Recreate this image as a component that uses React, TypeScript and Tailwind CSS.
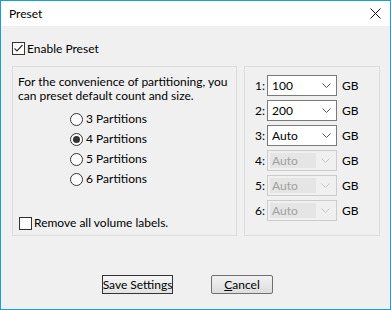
import React from "react";

const font = { fontFamily: 'Lato, "Noto Sans", "Liberation Sans", sans-serif' };

function Check({ checked }: { checked?: boolean }) {
  return (
    <div className="w-[13px] h-[13px] border border-[#333333] bg-white flex items-center justify-center shrink-0">
      {checked && (
        <svg width="11" height="11" viewBox="0 0 11 11">
          <path d="M1.5 5.5 L4 8 L9.5 2" fill="none" stroke="#333" strokeWidth="1.2" />
        </svg>
      )}
    </div>
  );
}

function Radio({ checked, label }: { checked?: boolean; label: string }) {
  return (
    <div className="flex items-center h-[20px]">
      <div className="w-[13px] h-[13px] rounded-full border border-[#333333] bg-white flex items-center justify-center">
        {checked && <div className="w-[7px] h-[7px] rounded-full bg-[#333333]" />}
      </div>
      <span className="ml-[3px]">{label}</span>
    </div>
  );
}

function Chevron({ color }: { color: string }) {
  return (
    <svg width="9" height="6" viewBox="0 0 9 6">
      <path d="M0.5 0.5 L4.5 4.5 L8.5 0.5" fill="none" stroke={color} strokeWidth="1" />
    </svg>
  );
}

function Combo({ n, value, disabled }: { n: number; value: string; disabled?: boolean }) {
  return (
    <div className="flex items-center h-[25px]">
      <span className="w-[12px]">{n}:</span>
      {disabled ? (
        <div className="w-[70px] h-[21px] border border-[#cccccc] bg-[#f0f0f0] flex items-center p-[2px]">
          <div className="w-[46px] h-full bg-[#e5e5e5] text-[#a0a0a0] pl-[2px] flex items-center">{value}</div>
          <div className="flex-1 flex justify-center pt-[1px]"><Chevron color="#c4c4c4" /></div>
        </div>
      ) : (
        <div className="w-[70px] h-[21px] border border-[#7a7a7a] bg-white flex items-center">
          <div className="w-[48px] pl-[4px]">{value}</div>
          <div className="flex-1 flex justify-center pt-[1px]"><Chevron color="#555555" /></div>
        </div>
      )}
      <span className="ml-[5px]">GB</span>
    </div>
  );
}

export default function App() {
  return (
    <div className="w-[391px] h-[310px] border border-[#18a0d6] bg-[#f0f0f0] flex flex-col text-[12px] text-black whitespace-nowrap" style={font}>
      <div className="h-[25px] bg-white flex items-center justify-between pl-[8px] pr-[9px]">
        <span className="leading-none">Preset</span>
        <svg width="11" height="11" viewBox="0 0 11 11">
          <path d="M0.5 0.5 L10.5 10.5 M10.5 0.5 L0.5 10.5" stroke="#111" strokeWidth="1" />
        </svg>
      </div>
      <div className="flex flex-col pl-[11px] pr-[10px]">
        <div className="flex items-center mt-[16px] h-[13px]">
          <Check checked />
          <span className="ml-[2px]">Enable Preset</span>
        </div>
        <div className="flex mt-[11px] gap-[7px]">
          <div className="w-[225px] h-[170px] border border-[#dcdcdc] flex flex-col pl-[5px] pt-[8px]">
            <div className="leading-[14px]">
              For the convenience of partitioning, you<br />can preset default count and size.
            </div>
            <div className="flex flex-col ml-[52px] mt-[6px]">
              <Radio label="3 Partitions" />
              <Radio label="4 Partitions" checked />
              <Radio label="5 Partitions" />
              <Radio label="6 Partitions" />
            </div>
            <div className="flex items-center mt-[25px] ml-[1px]">
              <Check />
              <span className="ml-[2px]">Remove all volume labels.</span>
            </div>
          </div>
          <div className="w-[136px] h-[170px] border border-[#dcdcdc] flex flex-col pl-[10px] pt-[6px]">
            <Combo n={1} value="100" />
            <Combo n={2} value="200" />
            <Combo n={3} value="Auto" />
            <Combo n={4} value="Auto" disabled />
            <Combo n={5} value="Auto" disabled />
            <Combo n={6} value="Auto" disabled />
          </div>
        </div>
        <div className="flex mt-[39px] ml-[90px] gap-[38px]">
          <button className="w-[71px] h-[19px] border border-[#333333] bg-gradient-to-b from-[#f6f6f6] to-[#e3e3e3] flex items-center justify-center leading-none">
            Save Settings
          </button>
          <button className="w-[62px] h-[19px] border border-[#707070] rounded-[2px] bg-gradient-to-b from-[#f2f2f2] to-[#dddddd] flex items-center justify-center leading-none">
            <span><span className="underline">C</span>ancel</span>
          </button>
        </div>
      </div>
    </div>
  );
}
